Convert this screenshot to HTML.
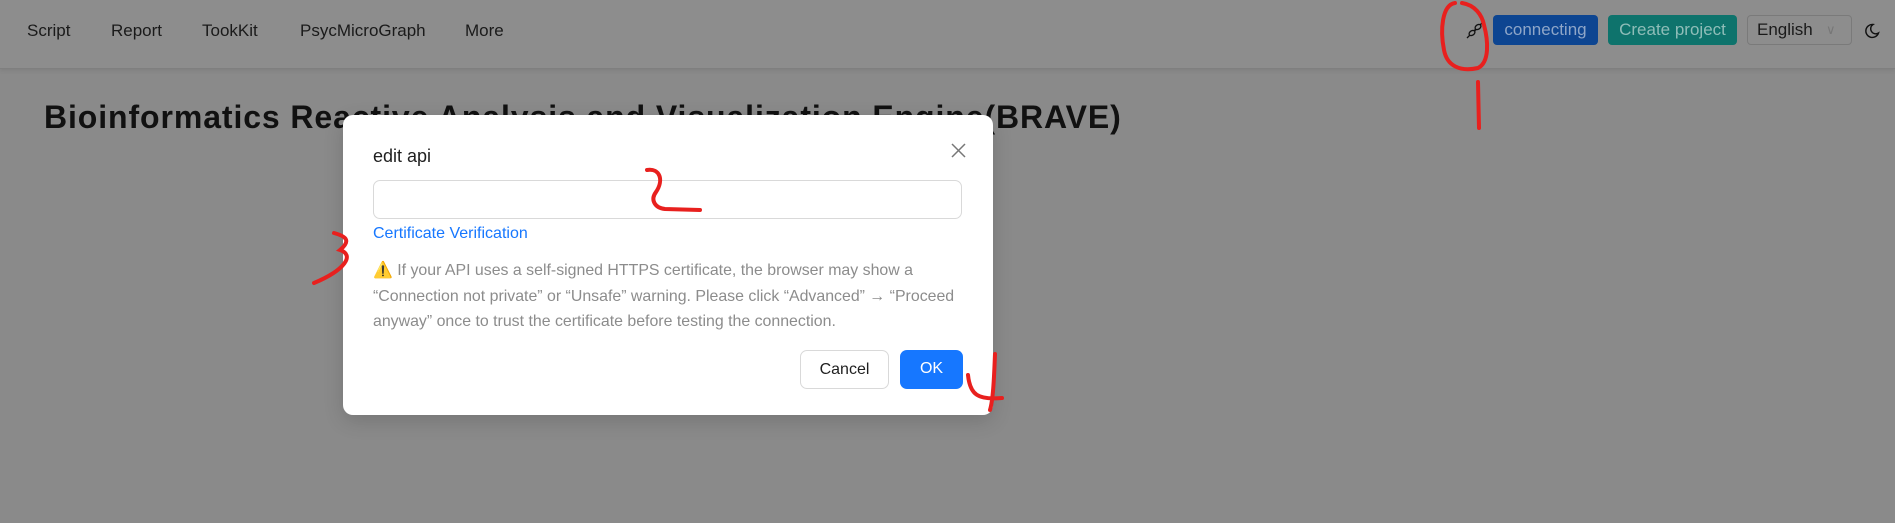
<!DOCTYPE html>
<html><head><meta charset="utf-8"><style>
*{box-sizing:border-box;margin:0;padding:0}
body{width:1895px;height:523px;overflow:hidden;background:#8a8a8a;font-family:"Liberation Sans",sans-serif;position:relative}
.nav{position:absolute;left:0;top:0;width:1895px;height:69px;background:#8d8d8d;border-bottom:1px solid #7f7f7f;box-shadow:0 2px 4px rgba(0,0,0,.08)}
.nav span{position:absolute;top:21px;font-size:17px;color:#1a1a1a}
.title{position:absolute;left:44px;top:99px;font-size:32px;letter-spacing:0.9px;font-weight:bold;color:#111;white-space:nowrap}
.btn{position:absolute;top:15px;height:30px;border-radius:4px;font-size:17px;line-height:30px;text-align:center}
.modal{position:absolute;left:343px;top:115px;width:650px;height:300px;background:#fff;border-radius:10px;box-shadow:0 6px 20px rgba(0,0,0,.15)}
.modal .t{position:absolute;left:30px;top:31px;font-size:18px;color:#1f1f1f}
.inp{position:absolute;left:30px;top:65px;width:589px;height:39px;border:1px solid #d9d9d9;border-radius:7px}
.link{position:absolute;left:30px;top:110px;font-size:16px;color:#1677ff}
.warn{position:absolute;left:30px;top:143px;width:620px;font-size:15.9px;line-height:25.5px;color:#8c8c8c;white-space:nowrap}
.b{position:absolute;top:235px;height:39px;border-radius:7px;font-size:16px;line-height:37px;text-align:center}
</style></head><body>
<div class="nav">
<span style="left:27px">Script</span>
<span style="left:111px">Report</span>
<span style="left:202px">TookKit</span>
<span style="left:300px">PsycMicroGraph</span>
<span style="left:465px">More</span>
<svg style="position:absolute;left:1466px;top:21px" width="18" height="18" viewBox="0 0 18 18" fill="none" stroke="#111" stroke-width="1.3"><ellipse cx="6" cy="12" rx="3.2" ry="2.2" transform="rotate(-35 6 12)"/><ellipse cx="12" cy="6" rx="3.2" ry="2.2" transform="rotate(-35 12 6)"/><path d="M1 17l2.5-2.5M17 1l-2.5 2.5M8 9l1.5 1M9 8l1 1.5"/></svg>
<div class="btn" style="left:1493px;width:105px;background:#0d4591;color:#8ea6c8">connecting</div>
<div class="btn" style="left:1608px;width:129px;background:#0e736c;color:#8fbdb8">Create project</div>
<div class="btn" style="left:1747px;width:105px;border:1px solid #7a7a7a;color:#1a1a1a;text-align:left;padding-left:9px;line-height:28px">English<span style="position:absolute;left:78px;top:0;color:#777;font-size:13px">&#8744;</span></div>
<svg style="position:absolute;left:1864px;top:23px" width="16" height="16" viewBox="0 0 16 16" fill="none" stroke="#111" stroke-width="1.4"><path d="M9 1.5A6.5 6.5 0 1 0 14.5 10 5 5 0 0 1 9 1.5z"/></svg>
</div>
<div class="title">Bioinformatics Reactive Analysis and Visualization Engine(BRAVE)</div>
<div class="modal">
<div class="t">edit api</div>
<svg style="position:absolute;left:608px;top:28px" width="15" height="15" viewBox="0 0 15 15" stroke="#777" stroke-width="1.5"><path d="M1 1l13 13M14 1L1 14"/></svg>
<div class="inp"></div>
<div class="link">Certificate Verification</div>
<div class="warn"><span style="color:#e8a33a">&#9888;&#65039;</span> If your API uses a self-signed HTTPS certificate, the browser may show a<br>“Connection not private” or “Unsafe” warning. Please click “Advanced” → “Proceed<br>anyway” once to trust the certificate before testing the connection.</div>
<div class="b" style="left:457px;width:89px;border:1px solid #d9d9d9;color:#1f1f1f">Cancel</div>
<div class="b" style="left:557px;width:63px;background:#1677ff;color:#fff">OK</div>
</div>
<svg style="position:absolute;left:0;top:0" width="1895" height="523" fill="none" stroke="#e8201e" stroke-width="4" stroke-linecap="round">
<path d="M1455 3C1442 5 1440 30 1444 50C1447 66 1460 72 1478 68C1490 62 1488 40 1484 25C1482 15 1475 5 1462 3"/>
<path d="M1478 82L1479 128"/>
<path d="M647 170C660 168 664 180 656 192C650 200 655 208 665 209L700 210"/>
<path d="M334 233C345 236 352 240 340 250C355 255 345 270 314 283"/>
<path d="M995 354C994 380 993 400 990 410M968 375C970 395 978 400 1002 398"/>
</svg>
</body></html>
